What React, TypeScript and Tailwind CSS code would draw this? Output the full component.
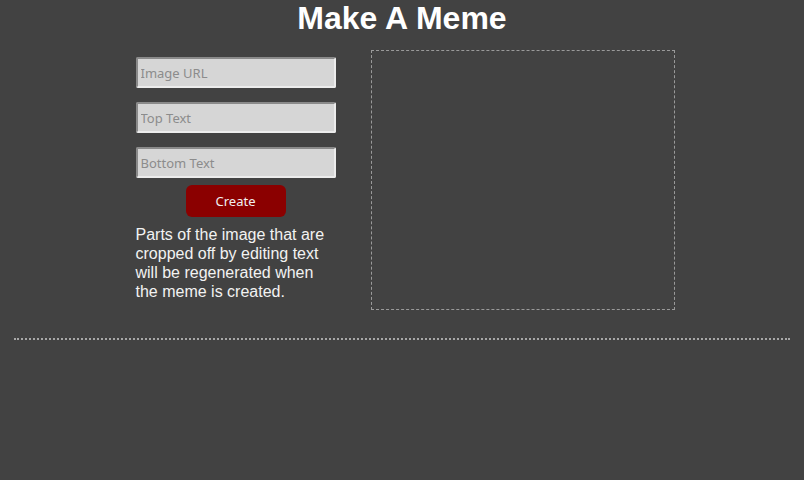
const fields = ['Image URL', 'Top Text', 'Bottom Text']

export default function App() {
  return (
    <div className="min-h-[480px] w-full bg-[#424242] font-['Liberation_Sans',Arial,sans-serif] text-white">
      <h1 className="pt-[1px] text-center text-[32px] font-bold leading-[34px]">Make A Meme</h1>

      <div className="mt-[15px] flex justify-center gap-[35px] pl-[6px]">
        {/* form column */}
        <div className="flex w-[200px] flex-col pt-[7px]">
          {fields.map((f) => (
            <input
              key={f}
              placeholder={f}
              className="mb-[14px] h-[31px] w-[200px] rounded-[2px] border-2 border-b-[#ececec] border-l-[#8a8a8a] border-r-[#ececec] border-t-[#8a8a8a] bg-[#d6d6d6] px-[3px] font-['Noto_Sans',sans-serif] text-[13px] text-[#333] outline-none placeholder:text-[#8c8c8c]"
            />
          ))}
          <button className="mx-auto -mt-[7px] h-[32px] w-[100px] rounded-[6px] bg-[#8b0000] pt-[2px] font-['Noto_Sans',sans-serif] text-[13px] text-[#f0f0f0]">
            Create
          </button>
          <p className="mt-[8px] text-[16px] leading-[19px] text-[#f2f2f2]">
            Parts of the image that are cropped off by editing text will be regenerated when the meme is created.
          </p>
        </div>

        {/* preview area */}
        <div className="h-[260px] w-[304px] border border-dashed border-[#9a9a9a]" />
      </div>

      <div className="mx-[14px] mt-[28px] border-t-2 border-dotted border-[#a8a8a8]" />
    </div>
  )
}
